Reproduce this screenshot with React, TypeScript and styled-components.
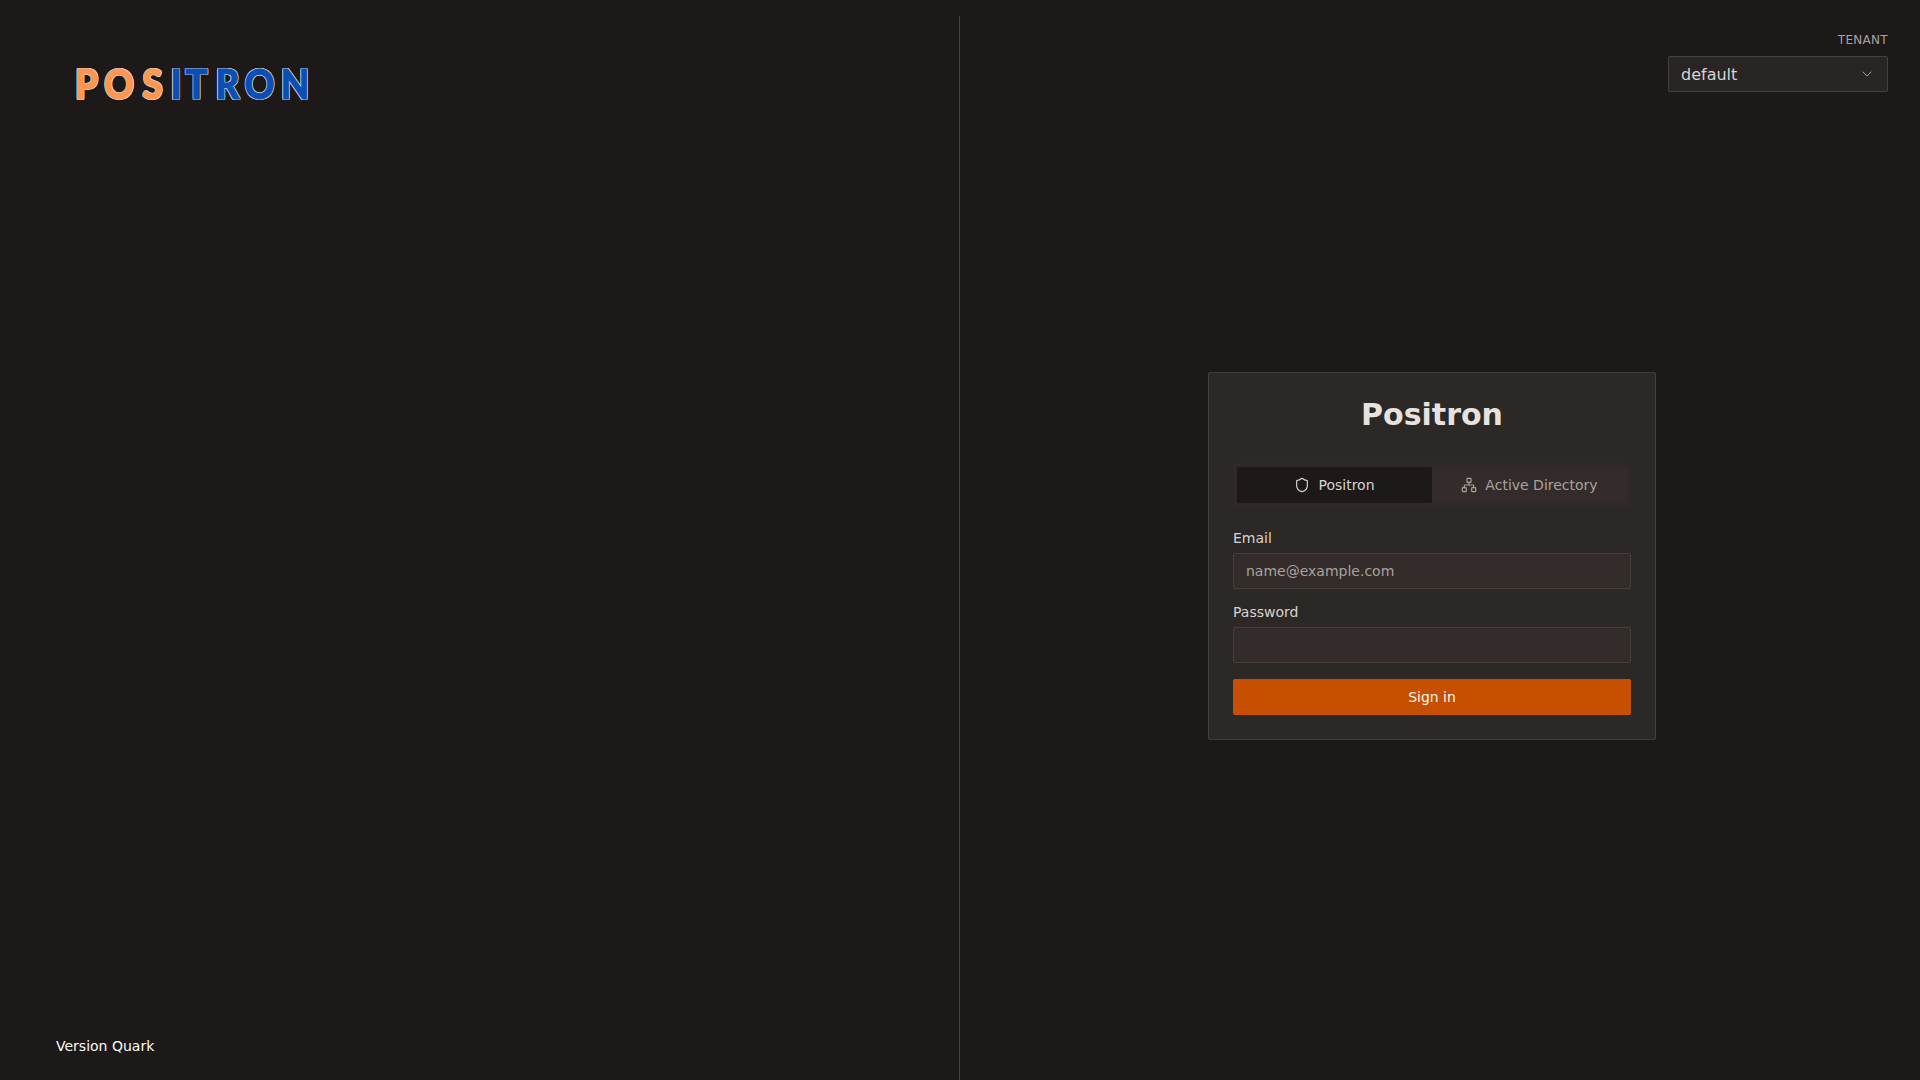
import styled, { createGlobalStyle } from "styled-components";
import { ChevronDown, Network, Shield } from "lucide-react";

const GlobalStyle = createGlobalStyle`
  html, body {
    margin: 0;
    padding: 0;
    background: #1d1919;
  }
  * {
    box-sizing: border-box;
  }
`;

const Page = styled.div`
  width: 100%;
  height: 1080px;
  padding: 16px 16px 0 0;
  display: flex;
  overflow: hidden;
  background: #1d1919;
  color: #e7e2dd;
  font-family: "DejaVu Sans", sans-serif;
`;

const BrandPanel = styled.aside`
  width: 960px;
  flex-shrink: 0;
  border-right: 1px solid #44403c;
  padding: 0 0 24px 56px;
  display: flex;
  flex-direction: column;
  justify-content: space-between;
`;

const Logo = styled.div`
  margin: 47px 0 0 20px;
  display: flex;
  height: 42px;
  font-family: "Lato", sans-serif;
  font-weight: 900;
  font-size: 41px;
  line-height: 42px;
`;

const LogoLetter = styled.span<{ $color: string; $width: number; $gap: number }>`
  width: ${(props) => props.$width}px;
  margin-left: ${(props) => props.$gap}px;
  flex-shrink: 0;
  display: flex;
  justify-content: center;
  transform: scaleX(0.9);
  color: ${(props) => props.$color};
  -webkit-text-stroke: 1px ${(props) => props.$color};
  text-shadow:
    1px 0 0 #d4d0cc,
    -1px 0 0 #d4d0cc,
    0 1px 0 #d4d0cc,
    0 -1px 0 #d4d0cc,
    1px 1px 0 #d4d0cc,
    -1px 1px 0 #d4d0cc,
    1px -1px 0 #d4d0cc,
    -1px -1px 0 #d4d0cc;
`;

const Version = styled.div`
  font-size: 14px;
  line-height: 20px;
  color: #fafaf9;
`;

const LoginPanel = styled.main`
  flex: 1;
  display: flex;
  flex-direction: column;
`;

const TenantBlock = styled.div`
  padding: 16px 16px 0 0;
  display: flex;
  flex-direction: column;
  align-items: flex-end;
  gap: 8px;
`;

const TenantLabel = styled.div`
  font-size: 12px;
  line-height: 16px;
  letter-spacing: 0.3px;
  color: #a8a29e;
`;

const TenantSelect = styled.div`
  width: 220px;
  height: 36px;
  padding: 0 12px;
  display: flex;
  align-items: center;
  justify-content: space-between;
  background: #292524;
  border: 1px solid #44403c;
  border-radius: 2px;
  font-size: 16px;
  color: #d6d3d1;

  svg {
    width: 16px;
    height: 16px;
    color: #a8a29e;
  }
`;

const CardArea = styled.div`
  flex: 1;
  padding-bottom: 60px;
  display: flex;
  align-items: center;
  justify-content: center;
`;

const Card = styled.section`
  width: 448px;
  height: 368px;
  padding: 24px;
  background: #2c2825;
  border: 1px solid #44403c;
  border-radius: 2px;
`;

const Title = styled.h1`
  margin: 0 0 30px;
  font-size: 30px;
  line-height: 36px;
  font-weight: 700;
  text-align: center;
  color: #e7e2dd;
`;

const TabList = styled.div`
  height: 44px;
  padding: 4px;
  display: grid;
  grid-template-columns: 1fr 1fr;
  background: #2f2a28;
  border-radius: 2px;
`;

const Tab = styled.div<{ $active?: boolean }>`
  display: flex;
  align-items: center;
  justify-content: center;
  gap: 8px;
  font-size: 14px;
  border-radius: 2px;
  background: ${(props) => (props.$active ? "#1d1919" : "#342c2a")};
  color: ${(props) => (props.$active ? "#d6d3d1" : "#a8a29e")};

  svg {
    width: 16px;
    height: 16px;
  }
`;

const Form = styled.form`
  margin-top: 21px;
  display: flex;
  flex-direction: column;
`;

const Field = styled.div`
  margin-bottom: 13px;
  display: flex;
  flex-direction: column;
  gap: 5px;
`;

const Label = styled.label`
  font-size: 14px;
  line-height: 20px;
  color: #d6d3d1;
`;

const Input = styled.input`
  width: 100%;
  height: 36px;
  padding: 0 12px;
  background: #342c2a;
  border: 1px solid #44403c;
  border-radius: 2px;
  outline: none;
  font-family: inherit;
  font-size: 14px;
  color: #d6d3d1;

  &::placeholder {
    color: #a8a29e;
    opacity: 1;
  }
`;

const SubmitButton = styled.button`
  width: 100%;
  height: 36px;
  margin-top: 3px;
  border: none;
  border-radius: 2px;
  background: #c75000;
  font-family: inherit;
  font-size: 14px;
  color: #f5f5f4;
`;

const ORANGE = "#ff964f";
const BLUE = "#0a4fb5";

const logoLetters = [
  { char: "P", color: ORANGE, width: 21, gap: 0 },
  { char: "O", color: ORANGE, width: 30, gap: 7 },
  { char: "S", color: ORANGE, width: 21, gap: 8 },
  { char: "I", color: BLUE, width: 8, gap: 9 },
  { char: "T", color: BLUE, width: 21, gap: 6 },
  { char: "R", color: BLUE, width: 25, gap: 8 },
  { char: "O", color: BLUE, width: 29, gap: 5 },
  { char: "N", color: BLUE, width: 26, gap: 8 },
];

export default function App() {
  return (
    <>
      <GlobalStyle />
      <Page>
        <BrandPanel>
          <Logo>
            {logoLetters.map((letter, i) => (
              <LogoLetter key={i} $color={letter.color} $width={letter.width} $gap={letter.gap}>
                {letter.char}
              </LogoLetter>
            ))}
          </Logo>
          <Version>Version Quark</Version>
        </BrandPanel>
        <LoginPanel>
          <TenantBlock>
            <TenantLabel>TENANT</TenantLabel>
            <TenantSelect>
              default
              <ChevronDown strokeWidth={1.5} />
            </TenantSelect>
          </TenantBlock>
          <CardArea>
            <Card>
              <Title>Positron</Title>
              <TabList>
                <Tab $active>
                  <Shield strokeWidth={1.75} />
                  Positron
                </Tab>
                <Tab>
                  <Network strokeWidth={1.75} />
                  Active Directory
                </Tab>
              </TabList>
              <Form>
                <Field>
                  <Label htmlFor="email">Email</Label>
                  <Input id="email" placeholder="name@example.com" />
                </Field>
                <Field>
                  <Label htmlFor="password">Password</Label>
                  <Input id="password" type="password" />
                </Field>
                <SubmitButton type="button">Sign in</SubmitButton>
              </Form>
            </Card>
          </CardArea>
        </LoginPanel>
      </Page>
    </>
  );
}
